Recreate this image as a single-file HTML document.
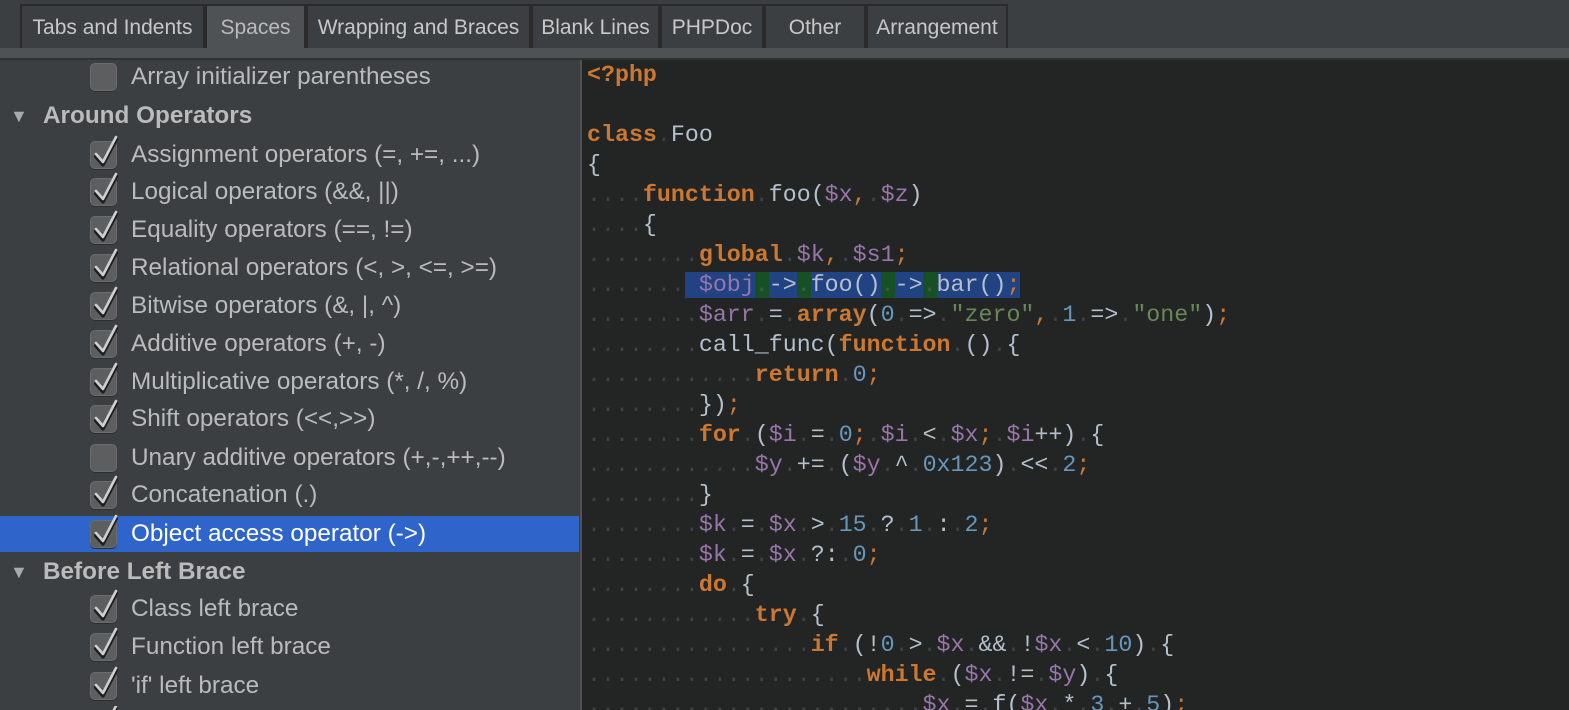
<!DOCTYPE html>
<html style="overflow:hidden;width:1569px;height:710px"><head><meta charset="utf-8"><style>
*{margin:0;padding:0;box-sizing:border-box}
body{width:1569px;height:710px;overflow:hidden;background:#3c3f41;font-family:"Liberation Sans",sans-serif;position:relative}
.tabbar{position:absolute;left:0;top:0;width:1569px;height:50px;background:#3c3f41}
.tab{position:absolute;top:4px;height:46px;border:2px solid #2b2b2b;border-bottom:none;background:#3c3f41;color:#c8c8c8;font-size:21px;line-height:44px;text-align:center;white-space:nowrap}
.tab.sel{background:#4e5254;color:#bbb}
.strip{position:absolute;left:0;top:48px;width:1569px;height:12px;background:#4e5254;border-bottom:2px solid #2f3133}
.left{position:absolute;left:0;top:60px;width:579px;height:650px;background:#3c3f41;overflow:hidden}
.row{position:absolute;left:0;width:579px;height:36px;color:#bbbbbb;font-size:24.3px;line-height:36px;white-space:nowrap}
.row .t{position:absolute;left:131px;top:0}
.row.sel{background:#2f65ca}
.row.sel .t{color:#fff}
.row.h .t{left:43px;font-weight:bold;color:#bbb}
.tri{position:absolute;left:10px;top:0;color:#aaa;font-size:18px}
.cb{position:absolute;left:90px;top:4px;width:27px;height:28px;background:#5c5e60;border-radius:5px;border:1px solid #6a6c6e;box-shadow:0 1px 0 #2c2e30}
.cb svg{position:absolute;left:-1px;top:-9px}
.code{position:absolute;left:580px;top:60px;width:989px;height:650px;background:#232525;border-left:2px solid #505254;font-family:"Liberation Mono",monospace;font-size:23.3px;color:#b4c0cc;overflow:hidden}
.ln{position:absolute;left:5px;height:30px;line-height:30px;white-space:pre}
i{font-style:normal;color:#3f4244}
b{color:#cc7832;font-weight:bold}
v{color:#9876aa}
n{color:#6897bb}
s{text-decoration:none;color:#6a8759}
o{color:#cc7832}
.sb{background:#214283}
.sg{background:#175024;color:#3f5a44}
</style></head><body>
<div class="tabbar">
<div class="tab" style="left:20px;width:185px">Tabs and Indents</div>
<div class="tab sel" style="left:205px;width:101px">Spaces</div>
<div class="tab" style="left:306px;width:225px">Wrapping and Braces</div>
<div class="tab" style="left:531px;width:129px">Blank Lines</div>
<div class="tab" style="left:660px;width:104px">PHPDoc</div>
<div class="tab" style="left:764px;width:102px">Other</div>
<div class="tab" style="left:866px;width:142px">Arrangement</div>
</div>
<div class="strip"></div>
<div class="left">
<div class="row" style="top:-1px"><div class="cb"></div><span class="t">Array initializer parentheses</span></div>
<div class="row h" style="top:38px"><span class="tri">▼</span><span class="t">Around Operators</span></div>
<div class="row" style="top:77px"><div class="cb c"></div><span class="t">Assignment operators (=, +=, ...)</span></div>
<div class="row" style="top:114px"><div class="cb c"></div><span class="t">Logical operators (&amp;&amp;, ||)</span></div>
<div class="row" style="top:152px"><div class="cb c"></div><span class="t">Equality operators (==, !=)</span></div>
<div class="row" style="top:190px"><div class="cb c"></div><span class="t">Relational operators (&lt;, &gt;, &lt;=, &gt;=)</span></div>
<div class="row" style="top:228px"><div class="cb c"></div><span class="t">Bitwise operators (&amp;, |, ^)</span></div>
<div class="row" style="top:266px"><div class="cb c"></div><span class="t">Additive operators (+, -)</span></div>
<div class="row" style="top:304px"><div class="cb c"></div><span class="t">Multiplicative operators (*, /, %)</span></div>
<div class="row" style="top:341px"><div class="cb c"></div><span class="t">Shift operators (&lt;&lt;,&gt;&gt;)</span></div>
<div class="row" style="top:380px"><div class="cb"></div><span class="t">Unary additive operators (+,-,++,--)</span></div>
<div class="row" style="top:417px"><div class="cb c"></div><span class="t">Concatenation (.)</span></div>
<div class="row sel" style="top:456px"><div class="cb c"></div><span class="t">Object access operator (-&gt;)</span></div>
<div class="row h" style="top:494px"><span class="tri">▼</span><span class="t">Before Left Brace</span></div>
<div class="row" style="top:531px"><div class="cb c"></div><span class="t">Class left brace</span></div>
<div class="row" style="top:569px"><div class="cb c"></div><span class="t">Function left brace</span></div>
<div class="row" style="top:608px"><div class="cb c"></div><span class="t">'if' left brace</span></div>
<div class="row" style="top:646px;height:4px;overflow:hidden"><div class="cb c"></div></div>
</div>
<div class="code">
<div class="ln" style="top:0"><b>&lt;?php</b></div>
<div class="ln" style="top:60px"><b>class</b><i>.</i>Foo</div>
<div class="ln" style="top:90px">{</div>
<div class="ln" style="top:120px"><i>....</i><b>function</b><i>.</i>foo(<v>$x</v><o>,</o><i>.</i><v>$z</v>)</div>
<div class="ln" style="top:150px"><i>....</i>{</div>
<div class="ln" style="top:180px"><i>........</i><b>global</b><i>.</i><v>$k</v><o>,</o><i>.</i><v>$s1</v><o>;</o></div>
<div class="ln" style="top:210px"><i>........</i><span class="sb" style="margin-left:-14px;padding-left:14px"><v>$obj</v></span><span class="sg">.</span><span class="sb">-&gt;</span><span class="sg">.</span><span class="sb">foo()</span><span class="sg">.</span><span class="sb">-&gt;</span><span class="sg">.</span><span class="sb">bar()<o>;</o></span></div>
<div class="ln" style="top:240px"><i>........</i><v>$arr</v><i>.</i>=<i>.</i><b>array</b>(<n>0</n><i>.</i>=&gt;<i>.</i><s>"zero"</s><o>,</o><i>.</i><n>1</n><i>.</i>=&gt;<i>.</i><s>"one"</s>)<o>;</o></div>
<div class="ln" style="top:270px"><i>........</i>call_func(<b>function</b><i>.</i>()<i>.</i>{</div>
<div class="ln" style="top:300px"><i>............</i><b>return</b><i>.</i><n>0</n><o>;</o></div>
<div class="ln" style="top:330px"><i>........</i>})<o>;</o></div>
<div class="ln" style="top:360px"><i>........</i><b>for</b><i>.</i>(<v>$i</v><i>.</i>=<i>.</i><n>0</n><o>;</o><i>.</i><v>$i</v><i>.</i>&lt;<i>.</i><v>$x</v><o>;</o><i>.</i><v>$i</v>++)<i>.</i>{</div>
<div class="ln" style="top:390px"><i>............</i><v>$y</v><i>.</i>+=<i>.</i>(<v>$y</v><i>.</i>^<i>.</i><n>0x123</n>)<i>.</i>&lt;&lt;<i>.</i><n>2</n><o>;</o></div>
<div class="ln" style="top:420px"><i>........</i>}</div>
<div class="ln" style="top:450px"><i>........</i><v>$k</v><i>.</i>=<i>.</i><v>$x</v><i>.</i>&gt;<i>.</i><n>15</n><i>.</i>?<i>.</i><n>1</n><i>.</i>:<i>.</i><n>2</n><o>;</o></div>
<div class="ln" style="top:480px"><i>........</i><v>$k</v><i>.</i>=<i>.</i><v>$x</v><i>.</i>?:<i>.</i><n>0</n><o>;</o></div>
<div class="ln" style="top:510px"><i>........</i><b>do</b><i>.</i>{</div>
<div class="ln" style="top:540px"><i>............</i><b>try</b><i>.</i>{</div>
<div class="ln" style="top:570px"><i>................</i><b>if</b><i>.</i>(!<n>0</n><i>.</i>&gt;<i>.</i><v>$x</v><i>.</i>&amp;&amp;<i>.</i>!<v>$x</v><i>.</i>&lt;<i>.</i><n>10</n>)<i>.</i>{</div>
<div class="ln" style="top:600px"><i>....................</i><b>while</b><i>.</i>(<v>$x</v><i>.</i>!=<i>.</i><v>$y</v>)<i>.</i>{</div>
<div class="ln" style="top:630px"><i>........................</i><v>$x</v><i>.</i>=<i>.</i>f(<v>$x</v><i>.</i>*<i>.</i><n>3</n><i>.</i>+<i>.</i><n>5</n>)<o>;</o></div>
</div>
<script>
document.querySelectorAll('.cb.c').forEach(function(e){e.innerHTML='<svg width="30" height="36" viewBox="0 0 30 36"><path d="M6 22 L13 30 L26 5" fill="none" stroke="#1e1e1e" stroke-width="4" stroke-linecap="round" stroke-linejoin="round" transform="translate(0,1.5)"/><path d="M6 21 L13 29 L26 4" fill="none" stroke="#cfcfcf" stroke-width="2.6" stroke-linecap="round" stroke-linejoin="round"/></svg>';});
</script>
</body></html>
